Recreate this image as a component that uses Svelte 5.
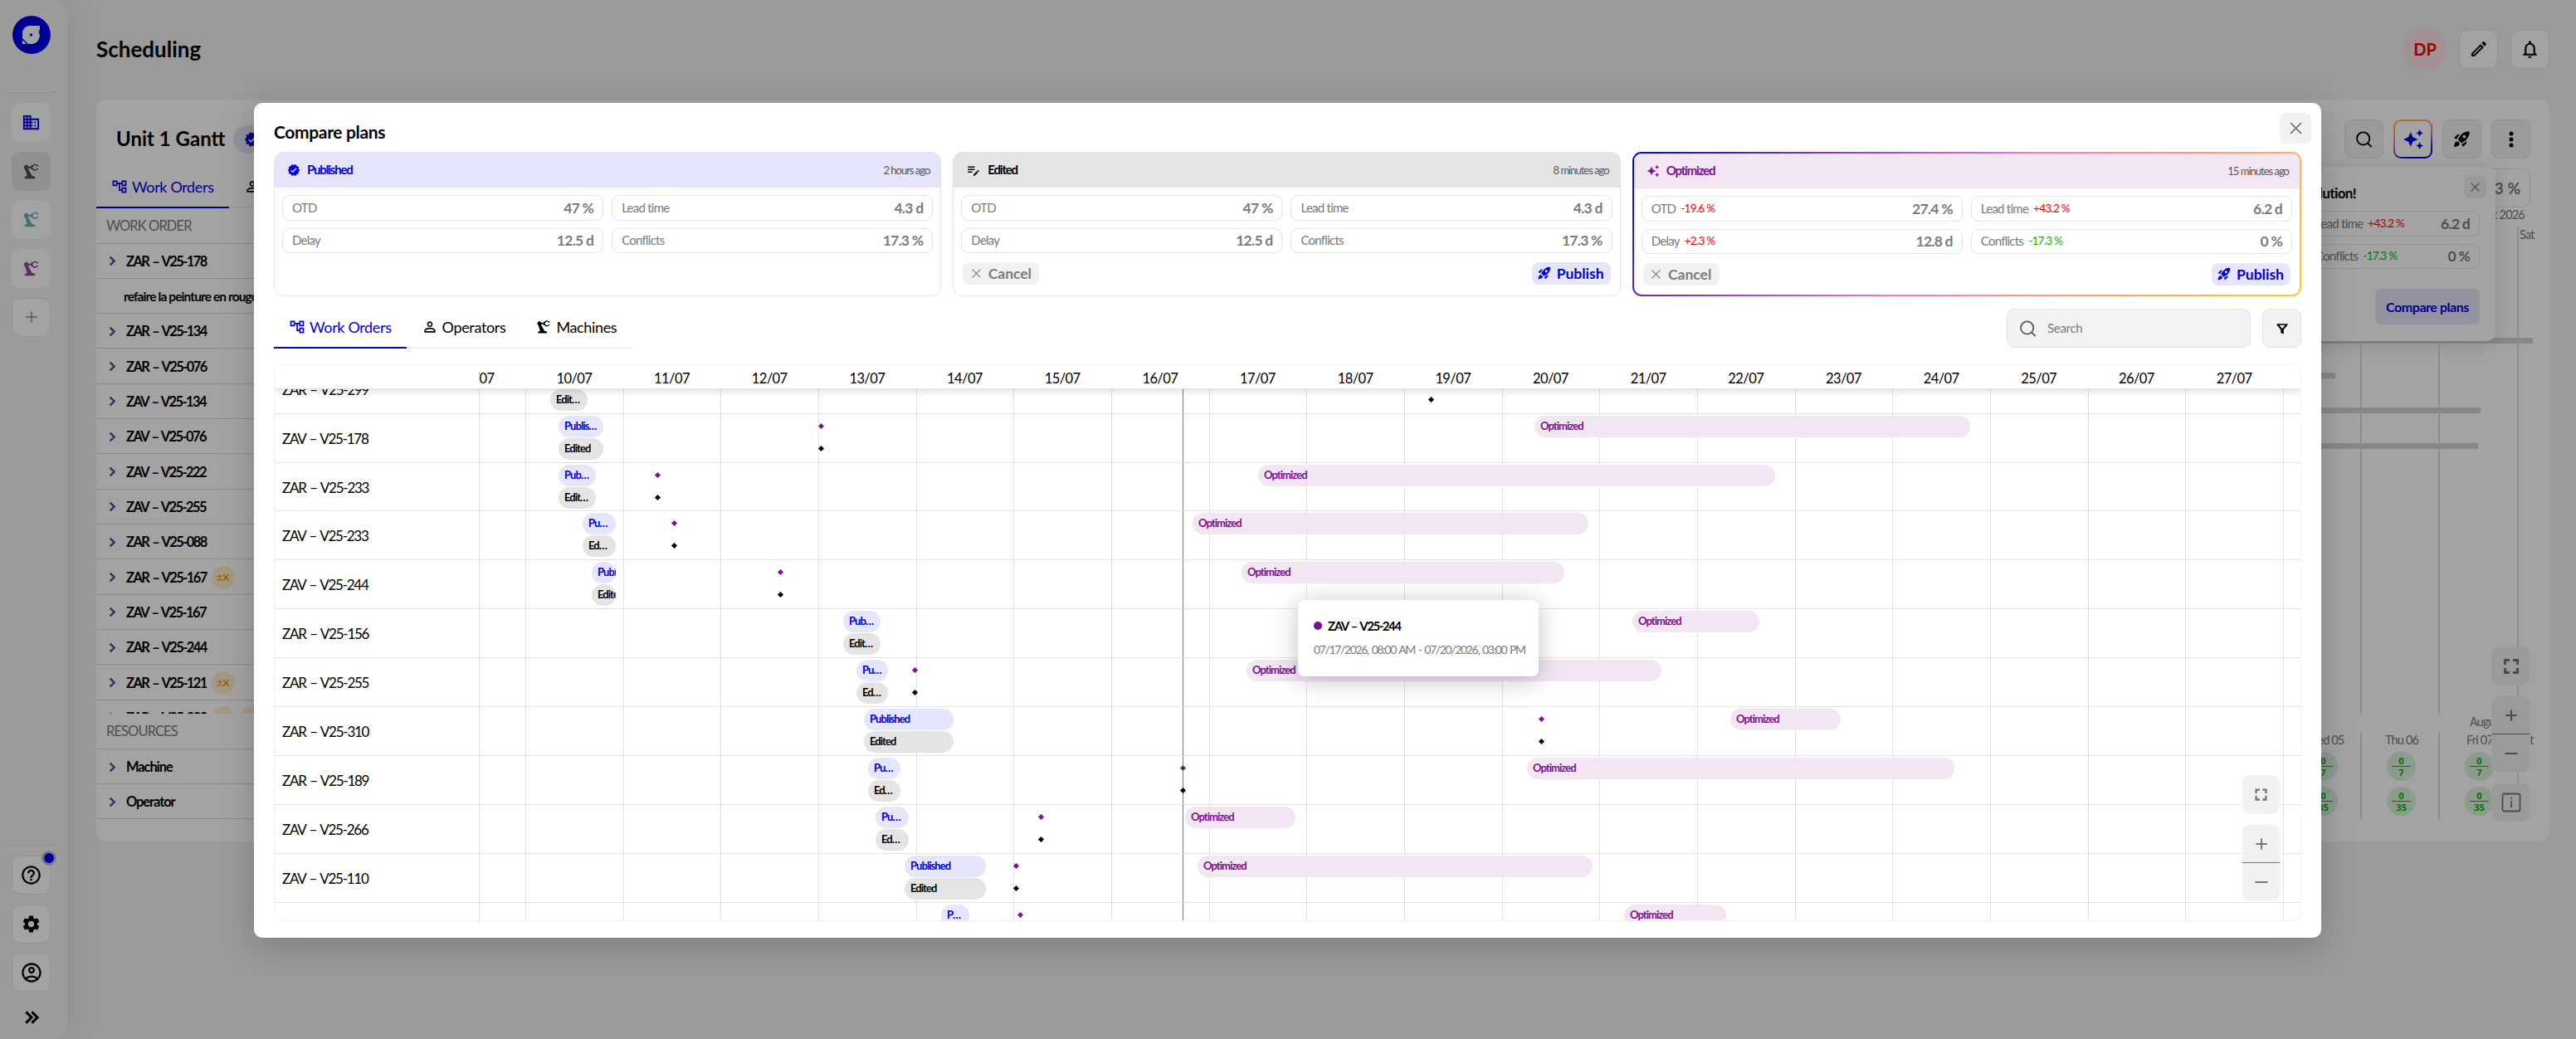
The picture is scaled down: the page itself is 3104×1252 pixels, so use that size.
<script lang="ts">
  type Kpi = { label: string; value: string; delta?: string; good?: boolean };
  type Bar = [number, number];
  type Row = {
    name: string;
    plan?: Bar;
    optimized?: Bar;
    marker?: number;
    clip?: boolean;
  };

  const icons: Record<string, string> = {
    tree: "M22 11V3h-7v3H9V3H2v8h7V8h2v10h4v3h7v-8h-7v3h-2V8h2v3h7zM7 9H4V5h3v4zm10 6h3v4h-3v-4zm0-10h3v4h-3V5z",
    person:
      "M12 5.9a2.1 2.1 0 1 1 0 4.2 2.1 2.1 0 0 1 0-4.2m0 9c2.97 0 6.1 1.46 6.1 2.1v1.1H5.9V17c0-.64 3.13-2.1 6.1-2.1M12 4C9.79 4 8 5.79 8 8s1.79 4 4 4 4-1.79 4-4-1.79-4-4-4zm0 9c-2.67 0-8 1.34-8 4v3h16v-3c0-2.66-5.33-4-8-4z",
    verified:
      "M23 12l-2.44-2.79.34-3.69-3.61-.82-1.89-3.2L12 2.96 8.6 1.5 6.71 4.69 3.1 5.5l.34 3.7L1 12l2.44 2.79-.34 3.7 3.61.82L8.6 22.5l3.4-1.47 3.4 1.46 1.89-3.19 3.61-.82-.34-3.69L23 12zm-12.91 4.72l-3.8-3.81 1.48-1.48 2.32 2.33 5.85-5.87 1.48 1.48-7.33 7.35z",
    note: "M3 10h11v2H3v-2zm0-2h11V6H3v2zm0 8h7v-2H3v2zm15.01-3.13l.71-.71c.39-.39 1.02-.39 1.41 0l.71.71c.39.39.39 1.02 0 1.41l-.71.71-2.12-2.12zm-.71.71l-5.3 5.3V21h2.12l5.3-5.3-2.12-2.12z",
    sparkles:
      "M19 9l1.25-2.75L23 5l-2.75-1.25L19 1l-1.25 2.75L15 5l2.75 1.25L19 9zm-7.5.5L9 4 6.5 9.5 1 12l5.5 2.5L9 20l2.5-5.5L17 12l-5.5-2.5zM19 15l-1.25 2.75L15 19l2.75 1.25L19 23l1.25-2.75L23 19l-2.75-1.25L19 15z",
    rocket:
      "M9.19 6.35c-2.04 2.29-3.44 5.58-3.57 5.89L2 10.69l4.05-4.05c.47-.47 1.15-.68 1.81-.55l1.33.26zM11.17 17s3.74-1.55 5.89-3.7c5.4-5.4 4.5-9.62 4.21-10.57-.95-.3-5.17-1.19-10.57 4.21C8.55 9.09 7 12.83 7 12.83L11.17 17zm6.48-2.19c-2.29 2.04-5.58 3.44-5.89 3.57L13.31 22l4.05-4.05c.47-.47.68-1.15.55-1.81l-.26-1.33zM9 18c0 .83-.34 1.58-.88 2.12C6.94 21.3 2 22 2 22s.7-4.94 1.88-6.12C4.42 15.34 5.17 15 6 15c1.66 0 3 1.34 3 3zm4-9c0-1.1.9-2 2-2s2 .9 2 2-.9 2-2 2-2-.9-2-2z",
    robot:
      "M19.93 8.35l-3.6 1.68L14 7.7V6.3l2.33-2.33 3.6 1.68c.38.18.82.01 1-.36.18-.38.01-.82-.36-1L16.65 2.6c-.38-.18-.83-.1-1.13.2l-1.74 1.74C13.6 4.22 13.32 4 13 4c-.55 0-1 .45-1 1v1H8.82C8.4 4.84 7.3 4 6 4 4.34 4 3 5.34 3 7c0 1.1.6 2.05 1.48 2.58L7.08 18H6c-1.1 0-2 .9-2 2v1h13v-1c0-1.1-.9-2-2-2h-1.62L8.41 8.77c.17-.24.31-.49.41-.77H12v1c0 .55.45 1 1 1 .32 0 .6-.16.78-.4l1.74 1.74c.3.3.75.38 1.13.2l3.92-1.83c.38-.18.54-.62.36-1-.18-.37-.62-.54-1-.36z",
    building:
      "M12 7V3H2v18h20V7H12zM6 19H4v-2h2v2zm0-4H4v-2h2v2zm0-4H4V9h2v2zm0-4H4V5h2v2zm4 12H8v-2h2v2zm0-4H8v-2h2v2zm0-4H8V9h2v2zm0-4H8V5h2v2zm10 12h-8v-2h2v-2h-2v-2h2v-2h-2V9h8v10zm-2-8h-2v2h2v-2zm0 4h-2v2h2v-2z",
    help: "M11 18h2v-2h-2v2zm1-16C6.48 2 2 6.48 2 12s4.48 10 10 10 10-4.48 10-10S17.52 2 12 2zm0 18c-4.41 0-8-3.59-8-8s3.59-8 8-8 8 3.59 8 8-3.59 8-8 8zm0-14c-2.21 0-4 1.79-4 4h2c0-1.1.9-2 2-2s2 .9 2 2c0 2-3 1.75-3 5h2c0-2.25 3-2.5 3-5 0-2.21-1.79-4-4-4z",
    gear: "M19.14 12.94c.04-.3.06-.61.06-.94 0-.32-.02-.64-.07-.94l2.03-1.58c.18-.14.23-.41.12-.61l-1.92-3.32c-.12-.22-.37-.29-.59-.22l-2.39.96c-.5-.38-1.03-.7-1.62-.94l-.36-2.54c-.04-.24-.24-.41-.48-.41h-3.84c-.24 0-.43.17-.47.41l-.36 2.54c-.59.24-1.13.57-1.62.94l-2.39-.96c-.22-.08-.47 0-.59.22L2.74 8.87c-.12.21-.08.47.12.61l2.03 1.58c-.05.3-.09.63-.09.94s.02.64.07.94l-2.03 1.58c-.18.14-.23.41-.12.61l1.92 3.32c.12.22.37.29.59.22l2.39-.96c.5.38 1.03.7 1.62.94l.36 2.54c.05.24.24.41.48.41h3.84c.24 0 .44-.17.47-.41l.36-2.54c.59-.24 1.13-.56 1.62-.94l2.39.96c.22.08.47 0 .59-.22l1.92-3.32c.12-.22.07-.47-.12-.61l-2.01-1.58zM12 15.6c-1.98 0-3.6-1.62-3.6-3.6s1.62-3.6 3.6-3.6 3.6 1.62 3.6 3.6-1.62 3.6-3.6 3.6z",
    account:
      "M12 2C6.48 2 2 6.48 2 12s4.48 10 10 10 10-4.48 10-10S17.52 2 12 2zM7.35 18.5C8.66 17.56 10.26 17 12 17s3.34.56 4.65 1.5C15.34 19.44 13.74 20 12 20s-3.34-.56-4.65-1.5zm10.79-1.38C16.45 15.8 14.32 15 12 15s-4.45.8-6.14 2.12C4.7 15.73 4 13.95 4 12c0-4.42 3.58-8 8-8s8 3.58 8 8c0 1.95-.7 3.73-1.86 5.12zM12 6c-1.93 0-3.5 1.57-3.5 3.5S10.07 13 12 13s3.5-1.57 3.5-3.5S13.93 6 12 6zm0 5c-.83 0-1.5-.67-1.5-1.5S11.17 8 12 8s1.5.67 1.5 1.5S12.83 11 12 11z",
    pencil:
      "M14.06 9.02l.92.92L5.92 19H5v-.92l9.06-9.06M17.66 3c-.25 0-.51.1-.7.29l-1.83 1.83 3.75 3.75 1.83-1.83c.39-.39.39-1.02 0-1.41l-2.34-2.34c-.2-.2-.45-.29-.71-.29zm-3.6 3.19L3 17.25V21h3.75L17.81 9.94l-3.75-3.75z",
    bell: "M12 22c1.1 0 2-.9 2-2h-4c0 1.1.9 2 2 2zm6-6v-5c0-3.07-1.63-5.64-4.5-6.32V4c0-.83-.67-1.5-1.5-1.5s-1.5.67-1.5 1.5v.68C7.64 5.36 6 7.92 6 11v5l-2 2v1h16v-1l-2-2zm-2 1H8v-6c0-2.48 1.51-4.5 4-4.5s4 2.02 4 4.5v6z",
    fullscreen:
      "M3 3h7v3H6v4H3V3zm11 0h7v7h-3V6h-4V3zM3 14h3v4h4v3H3v-7zm15 0h3v7h-7v-3h4v-4z",
    filter:
      "M1 2h22v2.800L15 14v9l-6-2v-7L1 4.800V2zm5 2.800 5 6.200h2l5-6.200z",
    more: "M12 7.400a2.500 2.500 0 1 0 0-5 2.500 2.500 0 0 0 0 5zm0 7.100a2.500 2.500 0 1 0 0-5 2.500 2.500 0 0 0 0 5zm0 7.100a2.500 2.500 0 1 0 0-5 2.500 2.500 0 0 0 0 5z",
  };

  const lines: Record<string, string> = {
    plus: "M12 3v18M3 12h18",
    minus: "M2 12h20",
    close: "M3 3l18 18M21 3L3 21",
    chevron: "M8 5l7 7-7 7",
    chevrons: "M4 4l8 8-8 8M12.500 4l8 8-8 8",
    search: "M10.500 2.500a8.300 8.300 0 1 1 0 16.600 8.300 8.300 0 0 1 0-16.600zM16.500 17l5 5",
    info: "M3.500 1.500h17a2 2 0 0 1 2 2v17a2 2 0 0 1-2 2h-17a2 2 0 0 1-2-2v-17a2 2 0 0 1 2-2zM12 10v8M12 6v2",
  };

  const sideItems = [
    { icon: "building", color: "#0000e1", active: false },
    { icon: "robot", color: "#4a4f55", active: true },
    { icon: "robot", color: "#63b5b5", active: false },
    { icon: "robot", color: "#8a4a9e", active: false },
  ];

  const orders = [
    { name: "ZAR – V25-178" },
    { name: "refaire la peinture en rouge", child: true },
    { name: "ZAR – V25-134" },
    { name: "ZAR – V25-076" },
    { name: "ZAV – V25-134" },
    { name: "ZAV – V25-076" },
    { name: "ZAV – V25-222" },
    { name: "ZAV – V25-255" },
    { name: "ZAR – V25-088" },
    { name: "ZAR – V25-167", badges: 1 },
    { name: "ZAV – V25-167" },
    { name: "ZAR – V25-244" },
    { name: "ZAR – V25-121", badges: 1 },
    { name: "ZAR – V25-299", badges: 2 },
  ];

  const baseKpis: Kpi[] = [
    { label: "OTD", value: "47 %" },
    { label: "Lead time", value: "4.3 d" },
    { label: "Delay", value: "12.5 d" },
    { label: "Conflicts", value: "17.3 %" },
  ];
  const optimizedKpis: Kpi[] = [
    { label: "OTD", value: "27.4 %", delta: "-19.6 %" },
    { label: "Lead time", value: "6.2 d", delta: "+43.2 %" },
    { label: "Delay", value: "12.8 d", delta: "+2.3 %" },
    { label: "Conflicts", value: "0 %", delta: "-17.3 %", good: true },
  ];

  const plans = [
    { id: "published", title: "Published", icon: "verified", age: "2 hours ago", kpis: baseKpis, actions: false },
    { id: "edited", title: "Edited", icon: "note", age: "8 minutes ago", kpis: baseKpis, actions: true },
    { id: "optimized", title: "Optimized", icon: "sparkles", age: "15 minutes ago", kpis: optimizedKpis, actions: true },
  ];

  const tabs = [
    { label: "Work Orders", icon: "tree" },
    { label: "Operators", icon: "person" },
    { label: "Machines", icon: "robot" },
  ];
  let activeTab = $state("Work Orders");

  // Gantt scale: one day is dayWidth px, firstDay is where 10/07 begins
  const dayWidth = 117.66;
  const firstDay = 55;
  const days = Array.from({ length: 20 }, (_, i) => ({
    x: firstDay + (i - 1) * dayWidth,
    label: i < 19 ? `${String(i + 9).padStart(2, "0")}/07` : "",
  }));

  const rows: Row[] = [
    { name: "ZAR – V25-299", plan: [86, 45], marker: 1147 },
    { name: "ZAV – V25-178", plan: [96, 54], marker: 412, optimized: [1272, 525] },
    { name: "ZAR – V25-233", plan: [96, 45], marker: 215, optimized: [939, 623] },
    { name: "ZAV – V25-233", plan: [125, 40], marker: 235, optimized: [860, 477] },
    { name: "ZAV – V25-244", plan: [136, 29], marker: 363, optimized: [919, 389], clip: true },
    { name: "ZAR – V25-156", plan: [439, 45], optimized: [1390, 153] },
    { name: "ZAR – V25-255", plan: [455, 38], marker: 525, optimized: [925, 500] },
    { name: "ZAR – V25-310", plan: [464, 108], marker: 1280, optimized: [1508, 133] },
    { name: "ZAR – V25-189", plan: [469, 39], marker: 848, optimized: [1263, 515] },
    { name: "ZAV – V25-266", plan: [478, 40], marker: 677, optimized: [851, 133] },
    { name: "ZAV – V25-110", plan: [513, 98], marker: 647, optimized: [866, 476] },
    { name: "", plan: [557, 34], marker: 652, optimized: [1380, 123] },
  ];

  const loads = [
    { x: 2782, total: 7, top: 906 },
    { x: 2876, total: 7, top: 906 },
    { x: 2970, total: 7, top: 906 },
    { x: 2782, total: 35, top: 948 },
    { x: 2876, total: 35, top: 948 },
    { x: 2970, total: 35, top: 948 },
  ];
</script>

{#snippet icon(name: string, size: number, stroke = 2)}
  <svg width={size} height={size} viewBox="0 0 24 24" aria-hidden="true">
    {#if icons[name]}
      <path d={icons[name]} fill="currentColor" fill-rule="evenodd" />
    {:else}
      <path d={lines[name]} fill="none" stroke="currentColor" stroke-width={stroke} />
    {/if}
  </svg>
{/snippet}

{#snippet kpi(item: Kpi)}
  <div class="kpi">
    <span class="kpi-label">{item.label}</span>
    {#if item.delta}
      <span class="delta" class:good={item.good}>{item.delta}</span>
    {/if}
    <span class="kpi-value">{item.value}</span>
  </div>
{/snippet}

{#snippet zoomControls(info: boolean)}
  <div class="zoom">
    <button class="zoom-btn" aria-label="Fullscreen">{@render icon("fullscreen", info ? 24 : 19)}</button>
    <div class="zoom-group">
      <button class="zoom-btn" aria-label="Zoom in">{@render icon("plus", 18, 2.6)}</button>
      <button class="zoom-btn" aria-label="Zoom out">{@render icon("minus", 18, 2.6)}</button>
    </div>
    {#if info}
      <button class="zoom-btn" aria-label="Legend">{@render icon("info", 24, 1.8)}</button>
    {/if}
  </div>
{/snippet}

<div class="app">
  <aside class="sidebar">
    <div class="logo">
      <svg width="46" height="46" viewBox="0 0 46 46" aria-hidden="true">
        <circle cx="23" cy="23" r="23" fill="#0000e1" />
        <path
          d="M12 34V21c0-5 4-9 9-9h12v5l-2 1 2 1-2 2 2 1c0 7-4 12-10 12z"
          fill="#fff"
        />
        <path d="M11 27l9 9" stroke="#0000e1" stroke-width="1.500" />
        <circle cx="22.500" cy="23" r="1.800" fill="#0000e1" />
      </svg>
    </div>
    <hr />
    <nav>
      {#each sideItems as item}
        <button class="side-btn" class:active={item.active} style:color={item.color} aria-label={item.icon}>
          {@render icon(item.icon, 23)}
        </button>
      {/each}
      <button class="side-btn outlined add" aria-label="Add">{@render icon("plus", 18, 2)}</button>
    </nav>
    <hr class="bottom-rule" />
    <nav>
      <button class="side-btn outlined" aria-label="Help">
        {@render icon("help", 27)}
        <span class="dot"></span>
      </button>
      <button class="side-btn outlined" aria-label="Settings">{@render icon("gear", 25)}</button>
      <button class="side-btn outlined" aria-label="Account">{@render icon("account", 28)}</button>
      <button class="expand" aria-label="Expand">{@render icon("chevrons", 20, 3.6)}</button>
    </nav>
  </aside>

  <main>
    <header class="page-head">
      <h1>Scheduling</h1>
      <div class="page-actions">
        <span class="avatar">DP</span>
        <button class="side-btn outlined" aria-label="Edit">{@render icon("pencil", 24)}</button>
        <button class="side-btn outlined" aria-label="Notifications">{@render icon("bell", 25)}</button>
      </div>
    </header>

    <section class="panel">
      <div class="panel-head">
        <h2>Unit 1 Gantt</h2>
        <span class="status">{@render icon("verified", 20)}</span>
        <div class="toolbar">
          <button class="tool" aria-label="Search">{@render icon("search", 22, 2)}</button>
          <button class="tool magic" aria-label="Optimize">{@render icon("sparkles", 26)}</button>
          <button class="tool" aria-label="Publish">{@render icon("rocket", 23)}</button>
          <button class="tool" aria-label="More">{@render icon("more", 24)}</button>
        </div>
      </div>
      <div class="panel-tabs">
        <div class="tabs">
          {#each tabs as tab}
            <button class="tab" class:active={tab.label === "Work Orders"}>
              {@render icon(tab.icon, 20)}
              <span>{tab.label}</span>
            </button>
          {/each}
        </div>
        <div class="panel-kpi">17.3 %</div>
      </div>
      <div class="list">
        <div class="list-head">WORK ORDER</div>
        <div class="list-scroll">
          {#each orders as order}
            <div class="order" class:child={order.child}>
              {#if !order.child}
                <span class="caret">{@render icon("chevron", 17, 3.4)}</span>
              {/if}
              <span>{order.name}</span>
              {#each Array(order.badges ?? 0) as _}
                <span class="badge">±X</span>
              {/each}
            </div>
          {/each}
        </div>
        <div class="list-head">RESOURCES</div>
        {#each ["Machine", "Operator"] as name}
          <div class="order resource">
            <span class="caret">{@render icon("chevron", 17, 3.4)}</span>
            <span>{name}</span>
          </div>
        {/each}
      </div>
    </section>
  </main>

  <!-- timeline of the page behind the dialog -->
  <div class="timeline">
    {#each [2844, 2938, 3033] as x}
      <i class="rule" style="left: {x}px; top: {x === 3033 ? 273 : 415}px; bottom: {1252 - 860}px"></i>
      <i class="rule" style="left: {x}px; top: 882px; bottom: {1252 - 988}px"></i>
    {/each}
    <i class="task" style="left: 2790px; top: 407px; width: 262px"></i>
    <i class="task" style="left: 2780px; top: 449px; width: 34px"></i>
    <i class="task" style="left: 2780px; top: 491px; width: 209px"></i>
    <i class="task" style="left: 2780px; top: 534px; width: 206px"></i>
    <span class="tick" style="left: 2969px; top: 250px">August 2026</span>
    <span class="tick" style="left: 3036px; top: 274px">Sat</span>
    <span class="tick" style="left: 2976px; top: 861px">August</span>
    <span class="tick" style="left: 2779px; top: 883px">Wed 05</span>
    <span class="tick" style="left: 2874px; top: 883px">Thu 06</span>
    <span class="tick" style="left: 2972px; top: 883px">Fri 07</span>
    <span class="tick" style="left: 3035px; top: 883px">Sat</span>
    {#each loads as load}
      <span class="load" style="left: {load.x}px; top: {load.top}px">
        <b>0</b><b>{load.total}</b>
      </span>
    {/each}
    <div class="page-zoom">{@render zoomControls(true)}</div>
  </div>

  <div class="popup">
    <div class="popup-head">
      <strong>We found a new solution!</strong>
      <button class="popup-close" aria-label="Close">{@render icon("close", 13, 2.4)}</button>
    </div>
    <div class="kpis">
      {#each optimizedKpis as item}
        {@render kpi(item)}
      {/each}
    </div>
    <button class="compare">Compare plans</button>
  </div>

  <div class="overlay">
    <div class="modal" role="dialog" aria-label="Compare plans">
      <header class="modal-head">
        <h3>Compare plans</h3>
        <button class="close" aria-label="Close">{@render icon("close", 17, 2.4)}</button>
      </header>

      <div class="cards">
        {#each plans as plan}
          <article class="card {plan.id}">
            <div class="card-head">
              {@render icon(plan.icon, plan.id === "edited" ? 18 : 16)}
              <span class="card-title">{plan.title}</span>
              <span class="age">{plan.age}</span>
            </div>
            <div class="kpis">
              {#each plan.kpis as item}
                {@render kpi(item)}
              {/each}
            </div>
            {#if plan.actions}
              <div class="card-actions">
                <button class="cancel">{@render icon("close", 13, 2.2)} Cancel</button>
                <button class="publish">{@render icon("rocket", 18)} Publish</button>
              </div>
            {/if}
          </article>
        {/each}
      </div>

      <div class="filters">
        <div class="tabs">
          {#each tabs as tab}
            <button class="tab" class:active={activeTab === tab.label} onclick={() => (activeTab = tab.label)}>
              {@render icon(tab.icon, 20)}
              <span>{tab.label}</span>
            </button>
          {/each}
        </div>
        <div class="search">
          {@render icon("search", 22, 1.9)}
          <span>Search</span>
        </div>
        <button class="tool" aria-label="Filter">{@render icon("filter", 14)}</button>
      </div>

      <div class="gantt">
        <div class="gantt-head">
          <div class="gantt-days">
            {#each days as day}
              <span class="day" style="left: {day.x}px">{day.label}</span>
            {/each}
          </div>
        </div>
        <div class="gantt-body">
          <div class="grid">
            {#each days as day}
              <i style="left: {day.x}px"></i>
            {/each}
            <i class="now" style="left: 847px"></i>
          </div>
          <div class="rows">
            {#each rows as row}
              <div class="row">
                <div class="row-name">{row.name}</div>
                <div class="track">
                  {#if row.plan}
                    <span class="bar published" class:clip={row.clip} style="left: {row.plan[0]}px; width: {row.plan[1]}px">
                      Published
                    </span>
                    <span class="bar edited" class:clip={row.clip} style="left: {row.plan[0]}px; width: {row.plan[1]}px">
                      Edited
                    </span>
                  {/if}
                  {#if row.optimized}
                    <span class="bar optimized" style="left: {row.optimized[0]}px; width: {row.optimized[1]}px">
                      Optimized
                    </span>
                  {/if}
                  {#if row.marker}
                    <i class="marker" style="left: {row.marker}px"></i>
                    <i class="marker second" style="left: {row.marker}px"></i>
                  {/if}
                </div>
              </div>
            {/each}
          </div>
          <div class="tooltip">
            <strong><i></i>ZAV – V25-244</strong>
            <span>07/17/2026, 08:00 AM - 07/20/2026, 03:00 PM</span>
          </div>
          <div class="modal-zoom">{@render zoomControls(false)}</div>
        </div>
      </div>
    </div>
  </div>
</div>

<style>
  :global(body) {
    margin: 0;
    font-family: Lato, "Open Sans", sans-serif;
    color: #000;
  }

  .app {
    position: relative;
    display: flex;
    width: 3104px;
    height: 1252px;
    overflow: hidden;
    background: #f1f1f1;
    box-sizing: border-box;
  }

  .app :global(*) {
    box-sizing: border-box;
  }

  svg {
    display: block;
    flex: none;
  }

  button {
    padding: 0;
    border: 0;
    background: none;
    font: inherit;
    color: inherit;
  }

  h1,
  h2,
  h3 {
    margin: 0;
    font-weight: 700;
  }

  /* sidebar */
  .sidebar {
    display: flex;
    flex-direction: column;
    align-items: center;
    width: 81px;
    padding: 19px 6px 15px 0;
    border-radius: 0 18px 18px 0;
    background: #f4f4f4;
    box-shadow: 4px 0 40px rgba(40, 60, 90, 0.09);
  }

  .sidebar nav {
    display: flex;
    flex-direction: column;
    gap: 11.7px;
  }

  hr {
    width: 58px;
    margin: 46px 0 12px;
    border: 0;
    border-top: 1px solid #dcdcdc;
  }

  .bottom-rule {
    margin-top: auto;
  }

  .side-btn {
    position: relative;
    display: flex;
    align-items: center;
    justify-content: center;
    width: 47px;
    height: 47px;
    border-radius: 10px;
    background: #fff;
  }

  .side-btn.active {
    background: #e2e2e2;
  }

  .side-btn.outlined {
    border: 1px solid #e6e6e6;
  }

  .side-btn.add {
    color: #8c8c8c;
  }

  .dot {
    position: absolute;
    top: -7px;
    right: -8px;
    width: 18px;
    height: 18px;
    border: 3px solid #b9b9ec;
    border-radius: 50%;
    background: #0000e1;
  }

  .expand {
    display: flex;
    justify-content: center;
    padding: 9px 0 1px;
  }

  /* page */
  main {
    display: flex;
    flex-direction: column;
    flex: 1;
    padding: 34px 32px 0 35px;
  }

  .page-head {
    display: flex;
    align-items: center;
    justify-content: space-between;
    height: 50px;
    margin-bottom: 36px;
  }

  h1 {
    font-size: 26px;
    letter-spacing: 0;
  }

  .page-actions {
    display: flex;
    align-items: center;
    gap: 15px;
  }

  .avatar {
    display: flex;
    align-items: center;
    justify-content: center;
    width: 50px;
    height: 50px;
    margin-right: 1px;
    border-radius: 50%;
    background: #ffe1e1;
    color: #f00000;
    font-size: 20px;
    font-weight: 700;
  }

  .panel {
    display: flex;
    flex-direction: column;
    height: 894px;
    border-radius: 12px;
    background: #fff;
    overflow: hidden;
  }

  .panel-head {
    display: flex;
    align-items: center;
    margin: 24px 23px 0 24px;
  }

  h2 {
    padding-bottom: 2px;
    font-size: 24px;
    letter-spacing: 0;
  }

  .status {
    display: flex;
    align-items: center;
    width: 120px;
    height: 34px;
    margin-left: 10px;
    padding: 0 13px;
    border-radius: 17px;
    background: #e5e5fb;
    color: #0000e1;
  }

  .toolbar {
    display: flex;
    gap: 12px;
    margin-left: auto;
  }

  .tool {
    display: flex;
    align-items: center;
    justify-content: center;
    width: 47px;
    height: 47px;
    border: 1px solid #e3e3e3;
    border-radius: 9px;
    background: #f2f2f2;
  }

  .tool.magic {
    border: 2px solid transparent;
    background:
      linear-gradient(#fff, #fff) padding-box,
      linear-gradient(160deg, #ffca28, #ffa07a 30%, #f075b8 50%, #0000e1 85%) border-box;
    color: #0000e1;
  }

  .panel-tabs {
    display: flex;
    justify-content: space-between;
    align-items: flex-start;
    margin: 12px 23px 0 0;
  }

  .panel-kpi {
    display: flex;
    align-items: center;
    justify-content: flex-end;
    width: 220px;
    height: 47px;
    padding-right: 11px;
    border: 1px solid #e3e3e3;
    border-radius: 10px;
    color: #7b7b7b;
    font-size: 19px;
    font-weight: 700;
  }

  .tabs {
    display: flex;
    height: 48px;
  }

  .tab {
    display: flex;
    align-items: center;
    gap: 5px;
    padding: 0 18px 2px;
    border-bottom: 2px solid #f2f2f2;
    font-size: 18px;
    letter-spacing: -0.35px;
  }

  .tab.active {
    border-color: #0000e1;
    color: #0000e1;
  }

  .list {
    width: 480px;
    font-size: 16.5px;
    font-weight: 700;
    letter-spacing: -0.9px;
  }

  .list-head {
    display: flex;
    align-items: center;
    height: 42.5px;
    padding: 0 12px;
    border-bottom: 1px solid #d6d6d6;
    color: #7b7b7b;
    font-weight: 400;
  }

  .list-scroll {
    height: 566.5px;
    overflow: hidden;
  }

  .order {
    display: flex;
    align-items: center;
    gap: 8px;
    height: 42.33px;
    padding: 1px 0 0 11px;
    border-bottom: 1px solid #d6d6d6;
    letter-spacing: -1.6px;
    word-spacing: 1.5px;
    white-space: nowrap;
  }

  .order.child {
    padding-left: 33px;
    font-size: 15.5px;
    letter-spacing: -0.9px;
    word-spacing: 0;
  }

  .order.resource {
    padding-top: 2px;
    letter-spacing: -1.1px;
  }

  .caret {
    color: #4b4b8c;
  }

  .badge {
    display: flex;
    align-items: center;
    justify-content: center;
    width: 28px;
    height: 28px;
    margin-left: -2px;
    border-radius: 50%;
    background: #ffeed2;
    color: #e89a00;
    font-size: 12px;
    letter-spacing: 0;
  }

  /* page timeline */
  .timeline {
    position: absolute;
    inset: 0;
    pointer-events: none;
  }

  .rule {
    position: absolute;
    width: 2px;
    background: #dedede;
  }

  .task {
    position: absolute;
    height: 7px;
    background: #d4d4d4;
  }

  .tick {
    position: absolute;
    color: #7b7b7b;
    font-size: 14.5px;
    line-height: 18px;
    letter-spacing: -0.85px;
    white-space: nowrap;
  }

  .load {
    position: absolute;
    display: flex;
    flex-direction: column;
    align-items: center;
    width: 35px;
    height: 35px;
    padding-top: 4px;
    border-radius: 50%;
    background: #d9f2dc;
    color: #00b400;
    font-family: "Open Sans", sans-serif;
    font-size: 11px;
    line-height: 13px;
  }

  .load b:first-child {
    width: 23px;
    border-bottom: 1px solid;
    text-align: center;
  }

  .page-zoom {
    position: absolute;
    top: 779px;
    right: 55px;
    padding: 0 0 0 1px;
  }

  .zoom {
    display: flex;
    flex-direction: column;
    gap: 12px;
  }

  .zoom-btn {
    display: flex;
    align-items: center;
    justify-content: center;
    width: 47px;
    height: 47px;
    border: 1px solid #f9f9f9;
    border-radius: 10px;
    background: #f1f1f1;
    color: #76767b;
  }

  .zoom-group .zoom-btn:first-child {
    border-bottom: 1px solid #76767b;
    border-radius: 10px 10px 0 0;
  }

  .zoom-group .zoom-btn:last-child {
    border-top: 0;
    border-radius: 0 0 10px 10px;
    height: 46px;
  }

  /* optimisation popup */
  .popup {
    position: absolute;
    top: 201px;
    right: 97px;
    display: flex;
    flex-direction: column;
    width: 468px;
    height: 210px;
    padding: 11px 19px 19px;
    border-radius: 10px;
    background: #fff;
    box-shadow: 0 4px 24px rgba(0, 0, 0, 0.14);
  }

  .popup-head {
    display: flex;
    justify-content: flex-end;
    height: 42px;
    margin-right: -8px;
    gap: 130px;
  }

  .popup-head strong {
    padding-top: 10px;
    font-size: 17px;
    letter-spacing: -0.6px;
  }

  .popup-close {
    display: flex;
    align-items: center;
    justify-content: center;
    width: 27px;
    height: 27px;
    border-radius: 7px;
    background: #f0f0f0;
    color: #76767b;
  }

  .popup .kpis {
    padding: 0;
  }

  .compare {
    align-self: flex-end;
    width: 126px;
    height: 43px;
    margin-top: 24px;
    padding-bottom: 1px;
    border-radius: 8px;
    background: #e5e5fb;
    color: #0000e1;
    font-size: 16px;
    font-weight: 700;
    letter-spacing: -0.45px;
  }

  /* dialog */
  .overlay {
    position: absolute;
    inset: 0;
    display: flex;
    align-items: center;
    justify-content: center;
    padding: 2px 1px 0 0;
    background: rgba(0, 0, 0, 0.36);
  }

  .modal {
    display: flex;
    flex-direction: column;
    width: 2491px;
    height: 1006px;
    border-radius: 10px;
    background: #fff;
    box-shadow: 0 8px 40px rgba(0, 0, 0, 0.2);
  }

  .modal-head {
    display: flex;
    align-items: flex-start;
    justify-content: space-between;
    height: 59px;
    padding: 12px 12px 0 24px;
  }

  h3 {
    margin-top: 10px;
    font-size: 21px;
    line-height: 26px;
    letter-spacing: -0.35px;
  }

  .close {
    display: flex;
    align-items: center;
    justify-content: center;
    width: 38px;
    height: 37px;
    border-radius: 8px;
    background: #f1f1f1;
    color: #76767b;
  }

  .cards {
    display: flex;
    gap: 14px;
    padding: 0 24px;
  }

  .card {
    flex: 1;
    height: 174px;
    border: 1px solid #e3e3e3;
    border-radius: 11px;
    overflow: hidden;
  }

  .card-head {
    display: flex;
    align-items: center;
    height: 42px;
    padding: 0 13px 0 15px;
    gap: 8px;
  }

  .card-title {
    padding-bottom: 3px;
    font-size: 15px;
    font-weight: 700;
    letter-spacing: -1.2px;
  }

  .age {
    margin-left: auto;
    padding-bottom: 1px;
    color: #57575c;
    font-size: 13px;
    letter-spacing: -1px;
  }

  .published .card-head {
    background: #e4e4fb;
    color: #0000e1;
  }

  .edited .card-head {
    background: #e4e4e4;
  }

  .optimized .card-head {
    background: #f2e6f3;
    color: #7d0f92;
  }

  .card.optimized {
    border: 2px solid transparent;
    background:
      linear-gradient(#fff, #fff) padding-box,
      linear-gradient(135deg, #0000e1, #ff78b9 50%, #ffca28) border-box;
  }

  .kpis {
    display: grid;
    grid-template-columns: 1fr 1fr;
    gap: 9px 10px;
    padding: 9px 9px 0;
  }

  .kpi {
    display: flex;
    align-items: center;
    height: 30.5px;
    padding: 0 11px;
    border: 1px solid #e3e3e3;
    border-radius: 9px;
    background: #fff;
    color: #7b7b7b;
  }

  .kpi-label {
    padding-bottom: 1px;
    font-size: 15px;
    letter-spacing: -0.75px;
  }

  .delta {
    margin-left: 6px;
    padding-bottom: 1px;
    color: #f00;
    font-size: 13.5px;
    letter-spacing: -0.7px;
  }

  .delta.good {
    color: #00b400;
  }

  .kpi-value {
    margin-left: auto;
    font-size: 17.5px;
    font-weight: 700;
    letter-spacing: -0.75px;
  }

  .card-actions {
    display: flex;
    justify-content: space-between;
    padding: 11px 11px 0;
  }

  .cancel,
  .publish {
    display: flex;
    align-items: center;
    justify-content: center;
    gap: 8px;
    width: 92px;
    height: 27px;
    padding-bottom: 1px;
    border-radius: 8px;
    background: #f1f1f1;
    color: #7b7b7b;
    font-size: 17.5px;
    font-weight: 700;
  }

  .publish {
    width: 95px;
    gap: 6px;
    padding-right: 2px;
    background: #e5e5fb;
    color: #0000e1;
  }

  .filters {
    display: flex;
    align-items: flex-start;
    gap: 14px;
    margin: 15px 24px 19px;
  }

  .search {
    display: flex;
    align-items: center;
    gap: 12px;
    width: 294px;
    height: 47px;
    margin-left: auto;
    padding: 0 14px;
    border: 1px solid #e3e3e3;
    border-radius: 9px;
    background: #f2f2f2;
    color: #57575c;
  }

  .search span {
    padding-bottom: 1px;
    color: #7b7b7b;
    font-size: 15px;
    letter-spacing: -0.3px;
  }

  .gantt {
    display: flex;
    flex-direction: column;
    height: 671px;
    margin: 0 24px;
    border: 1px solid #f2f2f2;
    border-radius: 10px;
    overflow: hidden;
  }

  .gantt-head {
    position: relative;
    z-index: 1;
    flex: none;
    height: 29px;
    padding-left: 246px;
    border-bottom: 1px solid #e2e2e2;
    background: #fff;
    box-shadow: 0 3px 8px rgba(0, 0, 0, 0.12);
  }

  .gantt-days {
    position: relative;
    height: 28px;
    overflow: hidden;
  }

  .day {
    position: absolute;
    width: 117.66px;
    padding-left: 2px;
    font-size: 16.5px;
    line-height: 32px;
    letter-spacing: -0.6px;
    text-align: center;
  }

  .gantt-body {
    position: relative;
    flex: 1;
    overflow: hidden;
  }

  .grid {
    position: absolute;
    inset: 0 0 0 246px;
    border-left: 1px solid #e2e2e2;
    overflow: hidden;
  }

  .grid i {
    position: absolute;
    top: 0;
    bottom: 0;
    width: 1px;
    background: #e2e2e2;
  }

  .grid .now {
    background: #7b7b7b;
  }

  .rows {
    position: relative;
    margin-top: -29.2px;
  }

  .row {
    display: flex;
    height: 58.9px;
    border-bottom: 1px solid #e2e2e2;
  }

  .row-name {
    display: flex;
    align-items: center;
    width: 246px;
    padding: 1px 0 0 9px;
    font-size: 17px;
    letter-spacing: -1.25px;
    word-spacing: 1.5px;
  }

  .track {
    position: relative;
    flex: 1;
  }

  .bar {
    position: absolute;
    top: 2px;
    height: 26px;
    padding: 0 7px;
    border-radius: 13px;
    overflow: hidden;
    text-overflow: ellipsis;
    white-space: nowrap;
    font-size: 13px;
    font-weight: 700;
    line-height: 25px;
    letter-spacing: -0.95px;
  }

  .bar.clip {
    padding-right: 0;
    text-overflow: clip;
  }

  .bar.published {
    background: #e5e5fb;
    color: #0000e1;
  }

  .bar.edited {
    top: 29px;
    padding-right: 8px;
    background: #e4e4e4;
  }

  .bar.edited.clip {
    padding-right: 0;
  }

  .bar.optimized {
    background: #f2e6f3;
    color: #7d0f92;
  }

  .marker {
    position: absolute;
    top: 12px;
    width: 5px;
    height: 5px;
    margin-left: -2px;
    background: #7d0f92;
    transform: rotate(45deg);
  }

  .marker.second {
    top: 39px;
    background: #000;
  }

  .tooltip {
    position: absolute;
    top: 254px;
    left: 1233px;
    display: flex;
    flex-direction: column;
    gap: 11px;
    width: 290px;
    height: 92px;
    padding: 22px 19px;
    border-radius: 8px;
    background: #fff;
    box-shadow: 0 4px 30px rgba(0, 0, 0, 0.25);
  }

  .tooltip strong {
    display: flex;
    align-items: center;
    gap: 7px;
    font-size: 15px;
    line-height: 18px;
    letter-spacing: -1.45px;
    word-spacing: 1.5px;
  }

  .tooltip i {
    width: 10px;
    height: 10px;
    border-radius: 50%;
    background: #7d0f92;
  }

  .tooltip span {
    color: #7b7b7b;
    font-size: 14px;
    line-height: 18px;
    letter-spacing: -1.35px;
    word-spacing: 1.5px;
    white-space: nowrap;
  }

  .modal-zoom {
    position: absolute;
    top: 465px;
    right: 24px;
  }
</style>
